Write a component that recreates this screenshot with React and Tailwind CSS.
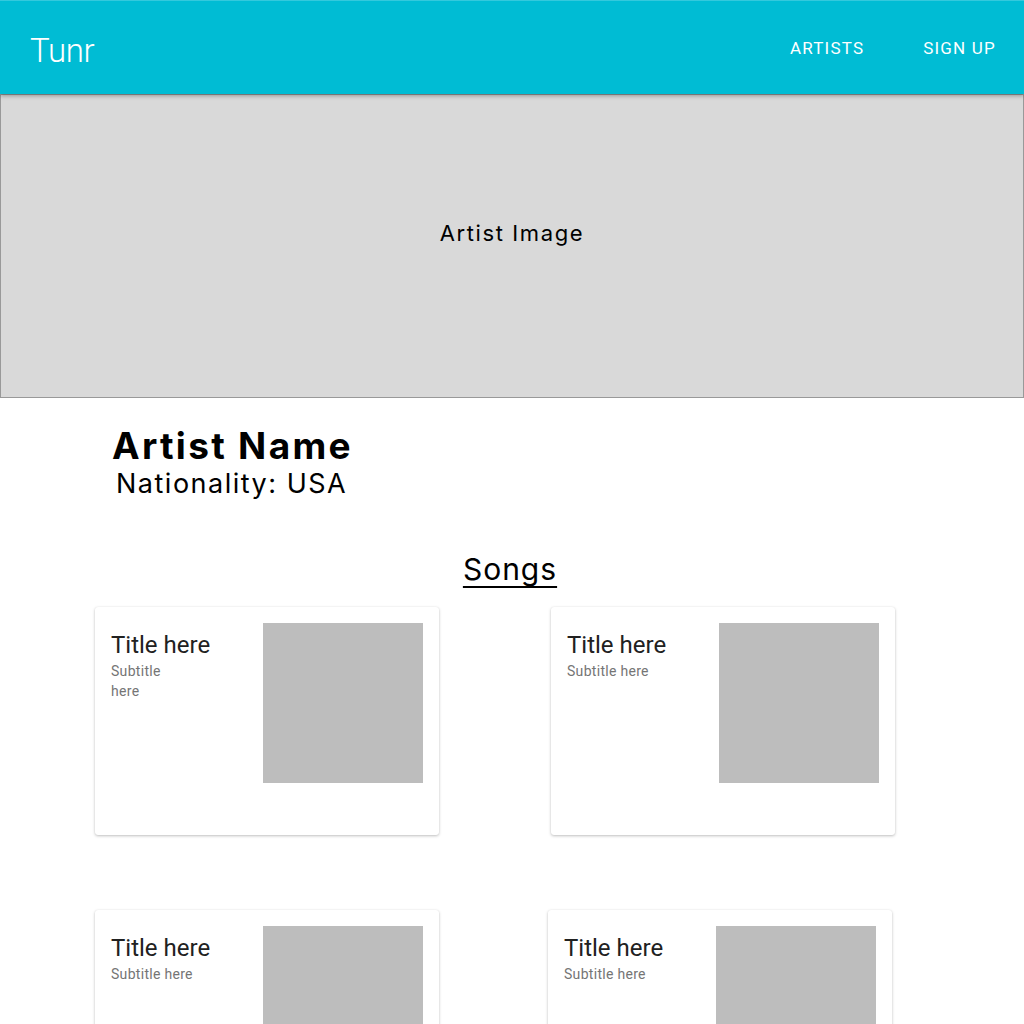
const songs = [
  { title: 'Title here', subtitle: 'Subtitle here', narrow: true },
  { title: 'Title here', subtitle: 'Subtitle here' },
  { title: 'Title here', subtitle: 'Subtitle here' },
  { title: 'Title here', subtitle: 'Subtitle here' },
];

function SongCard({ song }) {
  return (
    <div className="w-[344px] h-[228px] bg-white rounded-[3px] shadow-[0_1px_3px_rgba(0,0,0,0.25),0_0_1px_rgba(0,0,0,0.08)] p-4 flex justify-between">
      <div className="pt-[7px]">
        <h3 className="text-[24px] leading-[30px] text-[#212121] font-['Roboto',sans-serif]">{song.title}</h3>
        <p className={`text-[14px] leading-[20px] text-[#757575] mt-[1px] tracking-[0.3px] font-['Roboto',sans-serif] ${song.narrow ? 'max-w-[60px]' : ''}`}>
          {song.subtitle}
        </p>
      </div>
      <div className="w-[160px] h-[160px] bg-[#bdbdbd] shrink-0" />
    </div>
  );
}

export default function App() {
  return (
    <div className="min-h-screen bg-white font-['Inter',sans-serif]">
      <header className="h-[94px] bg-[#00bcd4] border-t border-[#33c9dd] flex items-center justify-between pl-[30px] pr-[28px] shadow-[0_2px_4px_rgba(0,0,0,0.3)] relative z-10">
        <span className="text-white text-[33px] font-['Roboto',sans-serif] font-light tracking-[-0.3px] mt-[6px]">Tunr</span>
        <nav className="flex gap-[59px] text-white text-[17px] font-['Roboto',sans-serif] tracking-[1.2px] mt-[2px]">
          <span>ARTISTS</span>
          <span>SIGN UP</span>
        </nav>
      </header>

      <div className="h-[304px] bg-[#d9d9d9] border border-[#999] flex items-center justify-center">
        <span className="text-[22px] text-black tracking-[1.6px] -mt-[26px]">Artist Image</span>
      </div>

      <div className="pl-[112px] pt-[27px]">
        <h1 className="text-[37px] leading-[42px] font-bold tracking-[2.3px] text-black">Artist Name</h1>
        <p className="text-[27px] leading-[34px] tracking-[1.5px] text-black pl-[4px]">Nationality: USA</p>
      </div>

      <h2 className="text-center text-[30px] tracking-[1px] underline underline-offset-[6px] decoration-[2px] mt-[46px] pr-[4px]">Songs</h2>

      <div className="pl-[95px] pt-[15px] flex flex-col gap-[75px]">
        <div className="flex gap-[112px]">
          <SongCard song={songs[0]} />
          <SongCard song={songs[1]} />
        </div>
        <div className="flex gap-[109px]">
          <SongCard song={songs[2]} />
          <SongCard song={songs[3]} />
        </div>
      </div>
    </div>
  );
}
